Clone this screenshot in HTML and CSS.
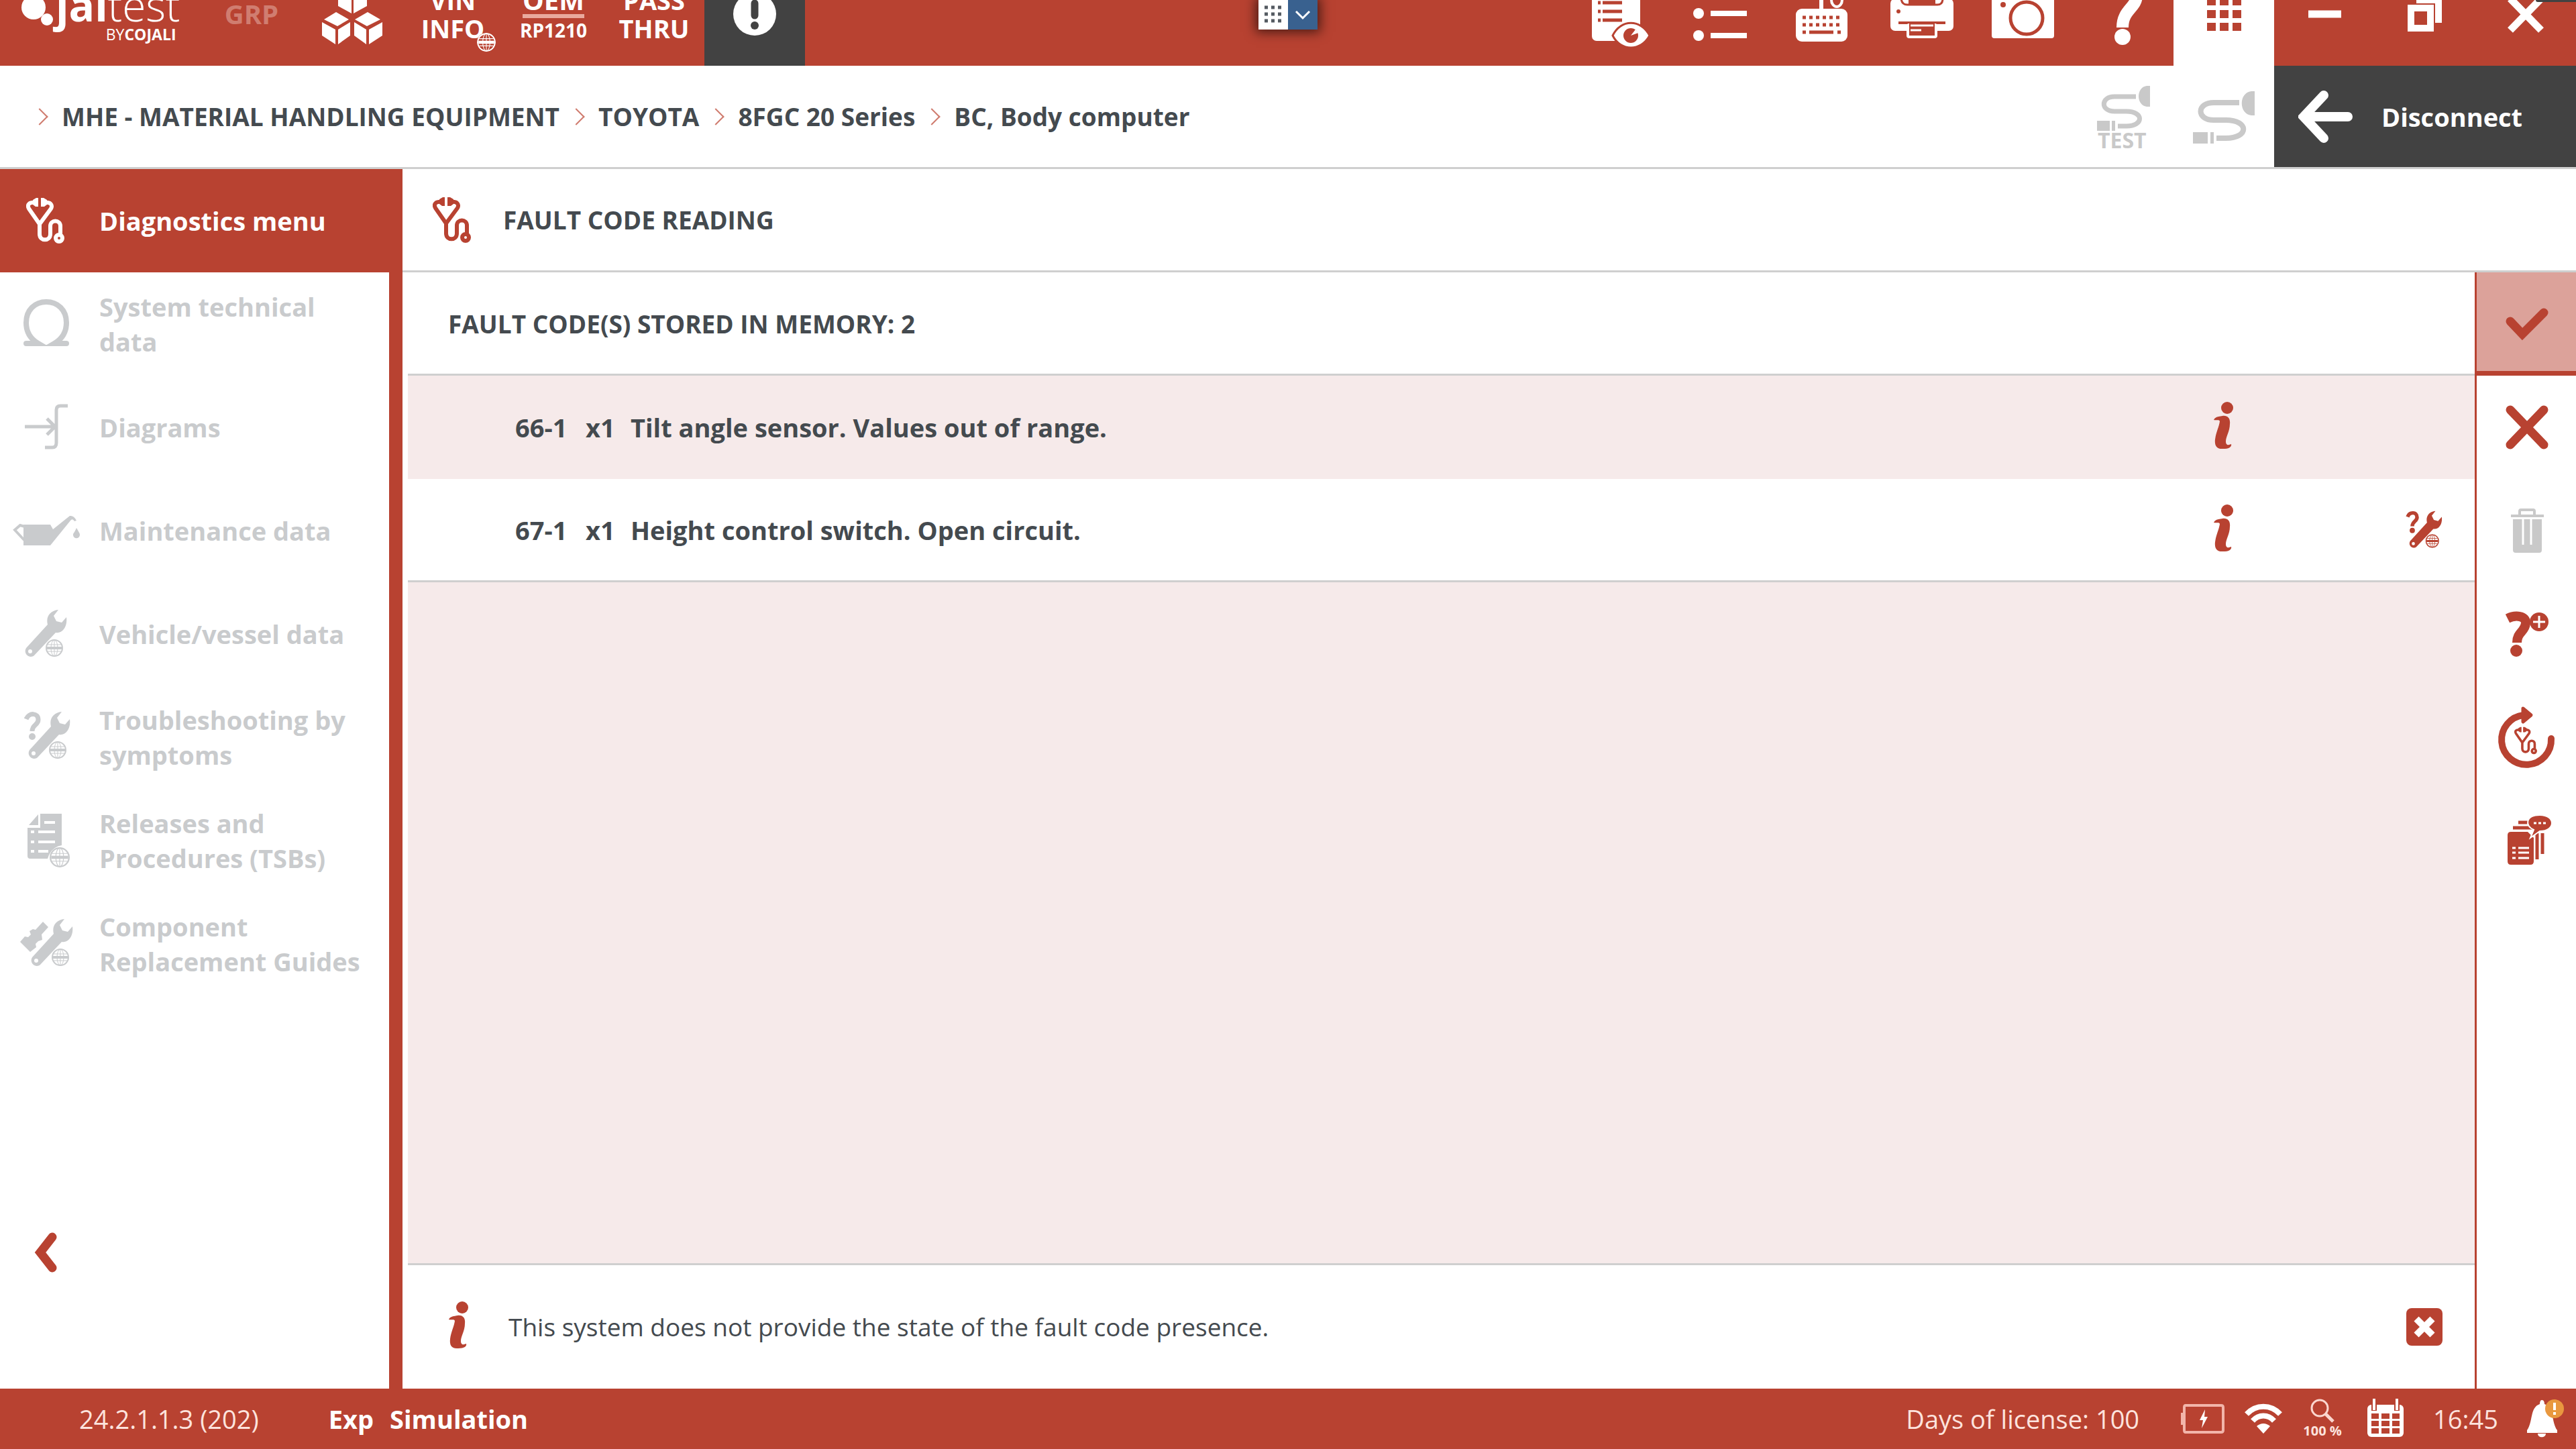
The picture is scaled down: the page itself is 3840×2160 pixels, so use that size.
FILE: index.html
```html
<!DOCTYPE html>
<html lang="en">
<head>
    <meta charset="UTF-8">
    <meta name="viewport" content="width=device-width, initial-scale=1.0">
    <title>Jaltest - Fault code reading</title>
    <link rel="stylesheet" href="styles.css">
</head>
<body>

    <!-- shared icons -->
    <svg class="sprite" aria-hidden="true">
        <symbol id="stethoscope" viewBox="0 0 57 68">
            <g fill="none" stroke="currentColor" stroke-width="6" stroke-linejoin="round">
                <path d="M15 7C4 6 1 10 4 16L20 39L37 16C40 10 36 6 27 7M20 38V54C20 65 36 65 36 54V42C36 32 51 32 51 42V54"/>
                <circle cx="49" cy="60" r="5"/>
            </g>
            <path fill="currentColor" d="M10 3L15 0H18V13H14L10 10ZM22 0H26L31 3V10L27 13H22Z"/>
        </symbol>
        <symbol id="globe" viewBox="0 0 26 26">
            <g fill="none" stroke="currentColor" stroke-width="2">
                <circle cx="13" cy="13" r="12"/>
                <ellipse cx="13" cy="13" rx="5" ry="12" stroke-width="1"/>
                <path d="M3 8H23M3 18H23M13 2V24" stroke-width="1"/>
                <path d="M2 13H24" stroke-width="4"/>
            </g>
        </symbol>
        <symbol id="wrench" viewBox="0 0 66 74">
            <path fill="currentColor" fill-rule="evenodd" d="M51 1C39 2 32 11 35 23L3 58C-2 66 8 75 15 69L47 35C57 37 65 26 63 12L56 20L48 18L44 10ZM9 60A3 3 0 1 0 9 66A3 3 0 1 0 9 60Z"/>
            <use href="#globe" x="32" y="45" width="26" height="26"/>
        </symbol>
        <symbol id="troubleshoot" viewBox="0 0 70 74">
            <path fill="none" stroke="currentColor" stroke-width="7" d="M3 12C7 2 21 2 21 13C21 21 12 20 12 30"/>
            <circle cx="12" cy="38" r="5" fill="currentColor"/>
            <use href="#wrench" x="5" y="0" width="66" height="74"/>
        </symbol>
        <symbol id="info" viewBox="0 0 30 70">
            <circle cx="21" cy="9" r="9" fill="currentColor"/>
            <path fill="currentColor" d="M1 27C3 22 9 22 14 21C22 20 26 25 25 33C25 44 19 52 19 59C19 65 23 65 27 63C28 67 24 70 15 70C5 71 2 65 3 56C4 46 9 37 10 29C9 26 5 28 1 27Z"/>
        </symbol>
    </svg>

    <header class="topbar">
        <div class="logo">
            <svg class="logo-mark" viewBox="0 0 83 154" aria-hidden="true">
                <ellipse cx="50" cy="67" rx="18" ry="18" fill="#fff"/>
                <circle cx="70" cy="85" r="9" fill="#fff"/>
            </svg>
            <div class="logo-text">
                <div class="logo-name"><b>jal</b>test</div>
                <div class="logo-by">BY<b>COJALI</b></div>
            </div>
        </div>
        <button class="tool tool-faded">GRP</button>
        <button class="tool" aria-label="Modules">
            <svg viewBox="0 0 150 154">
                <g fill="#fff">
                    <path d="M54 38L74 48V76L65 71L54 65ZM97 38L77 48V76L86 71L97 65Z"/>
                    <path d="M51 74L70 85L53 95L33 85ZM98 74L117 85L97 95L79 85Z"/>
                    <path d="M30 89L50 100V122L30 109ZM72 89L54 100V122L72 109ZM78 89L96 100V122L78 109ZM120 89L100 100V122L120 109Z"/>
                </g>
            </svg>
        </button>
        <button class="tool"><span>VIN<br>INFO</span><svg class="tool-badge"><use href="#globe"/></svg></button>
        <button class="tool tool-oem"><span>OEM</span><small>RP1210</small></button>
        <button class="tool"><span>PASS<br>THRU</span></button>
        <button class="tool tool-dark" aria-label="Warnings">
            <svg viewBox="0 0 150 154">
                <circle cx="75" cy="77" r="32" fill="#fff"/>
                <path d="M75 61V79" stroke="#424242" stroke-width="11" stroke-linecap="round"/>
                <circle cx="75" cy="94" r="6" fill="#424242"/>
            </svg>
        </button>

        <div class="spacer"></div>

        <button class="tool" aria-label="View report">
            <svg viewBox="0 0 150 154">
                <rect x="33" y="30" width="72" height="87" rx="7" fill="#fff"/>
                <path d="M42 60H46M49 60H78M42 73H46M49 73H78M42 86H46M49 86H78" stroke="#b84231" stroke-width="5"/>
                <path d="M64 109C76 84 106 84 119 109C106 133 76 133 64 109Z" fill="#fff" stroke="#b84231" stroke-width="3"/>
                <circle cx="91" cy="109" r="11" fill="#b84231"/>
                <path d="M91 109L98 100L102 105Z" fill="#fff"/>
            </svg>
        </button>
        <button class="tool" aria-label="List">
            <svg viewBox="0 0 150 154">
                <g fill="#fff">
                    <circle cx="42" cy="43" r="8"/><circle cx="42" cy="76" r="8"/><circle cx="42" cy="109" r="8"/>
                </g>
                <path d="M60 43H114M60 76H114M60 109H114" stroke="#fff" stroke-width="8"/>
            </svg>
        </button>
        <button class="tool" aria-label="Keyboard">
            <svg viewBox="0 0 150 154">
                <path d="M75 72V34" stroke="#fff" stroke-width="6"/>
                <ellipse cx="98" cy="56" rx="8" ry="10" fill="none" stroke="#fff" stroke-width="4"/>
                <rect x="37" y="69" width="77" height="49" rx="9" fill="#fff"/>
                <path d="M47 82H104M47 93H104" stroke="#b84231" stroke-width="5" stroke-dasharray="5 5"/>
                <path d="M47 104H52M57 104H93M99 104H104" stroke="#b84231" stroke-width="5"/>
            </svg>
        </button>
        <button class="tool" aria-label="Print">
            <svg viewBox="0 0 150 154">
                <path d="M44 40H107V60H44Z" fill="#fff"/>
                <rect x="28" y="54" width="94" height="48" rx="7" fill="#fff"/>
                <path d="M44 54Q45 63 53 63H98Q106 63 106 54" fill="none" stroke="#b84231" stroke-width="3"/>
                <path d="M55 52H95V62H55Z" fill="#b84231"/>
                <circle cx="40" cy="73" r="3" fill="#b84231"/>
                <path d="M40 90H110" stroke="#b84231" stroke-width="4"/>
                <rect x="52" y="91" width="46" height="22" rx="4" fill="#fff"/>
                <path d="M56 91H94V109H56Z" fill="#b84231"/>
                <path d="M58 94H92M58 101H74" stroke="#fff" stroke-width="3"/>
            </svg>
        </button>
        <button class="tool" aria-label="Screenshot">
            <svg viewBox="0 0 150 154">
                <path d="M54 44H96L101 54H54Z" fill="#fff"/>
                <rect x="29" y="52" width="93" height="61" rx="4" fill="#fff"/>
                <circle cx="81" cy="83" r="24" fill="none" stroke="#b84231" stroke-width="5"/>
                <circle cx="46" cy="63" r="4" fill="#b84231"/>
            </svg>
        </button>
        <button class="tool" aria-label="Help">
            <svg viewBox="0 0 150 154">
                <path d="M74 97C74 70 95 68 95 49C95 30 75 28 53 37" fill="none" stroke="#fff" stroke-width="18"/>
                <circle cx="74" cy="111" r="12" fill="#fff"/>
            </svg>
        </button>
        <button class="tool tool-light" aria-label="Apps">
            <svg viewBox="0 0 150 154">
                <path d="M50 58H63M69 58H82M88 58H101M50 77H63M69 77H82M88 77H101M50 96H63M69 96H82M88 96H101" stroke="#b84231" stroke-width="12"/>
            </svg>
        </button>
        <button class="tool" aria-label="Minimize">
            <svg viewBox="0 0 150 154"><path d="M51 77H100" stroke="#fff" stroke-width="11"/></svg>
        </button>
        <button class="tool" aria-label="Restore">
            <svg viewBox="0 0 150 154">
                <path d="M62 48H100V90H90V61H62Z" fill="#fff"/>
                <rect x="54" y="68" width="29" height="30" fill="none" stroke="#fff" stroke-width="10"/>
            </svg>
        </button>
        <button class="tool" aria-label="Close">
            <svg viewBox="0 0 150 154"><path d="M52 54L98 101M98 54L52 101" stroke="#fff" stroke-width="11"/></svg>
        </button>
    </header>

    <div class="crumbbar">
        <nav class="crumbs" aria-label="Breadcrumb">
            <a href="#">MHE - MATERIAL HANDLING EQUIPMENT</a>
            <a href="#">TOYOTA</a>
            <a href="#">8FGC 20 Series</a>
            <a href="#">BC, Body computer</a>
        </nav>
        <button class="plug" aria-label="Cable test" disabled>
            <svg viewBox="0 0 150 151">
                <path d="M94 46H62C41 46 41 68 62 68H80C106 68 106 90 80 90H67" fill="none" stroke="currentColor" stroke-width="7"/>
                <path d="M115 30H110C94 32 94 59 110 61H115ZM36 82H55V97H36ZM58 82H63V97H58Z" fill="currentColor"/>
                <text x="37" y="123">TEST</text>
            </svg>
        </button>
        <button class="plug" aria-label="Cable" disabled>
            <svg viewBox="0 0 150 151">
                <path d="M98 55H60C34 55 34 81 60 81H78C113 81 113 108 78 108H64" fill="none" stroke="currentColor" stroke-width="8"/>
                <path d="M121 38H116C97 40 97 72 116 74H121ZM29 99H51V116H29ZM55 99H60V116H55Z" fill="currentColor"/>
            </svg>
        </button>
        <button class="disconnect">
            <svg viewBox="0 0 82 78"><path d="M38 7L8 39L38 71M10 39H74" fill="none" stroke="#fff" stroke-width="14" stroke-linecap="round"/></svg>
            Disconnect
        </button>
    </div>

    <div class="main">
        <aside class="sidebar">
            <button class="menu-item active">
                <svg viewBox="0 0 148 154"><use href="#stethoscope" x="39" y="43" width="57" height="68"/></svg>
                <span>Diagnostics menu</span>
            </button>
            <div class="menu">
                <button class="menu-item" disabled>
                    <svg viewBox="0 0 148 154"><path d="M39 106H57C45 99 39 88 39 75C39 56 52 44 69 44C86 44 99 56 99 75C99 88 93 99 81 106H99" fill="none" stroke="currentColor" stroke-width="8" stroke-linecap="round"/></svg>
                    <span>System technical data</span>
                </button>
                <button class="menu-item" disabled>
                    <svg viewBox="0 0 148 154"><path d="M101 45H90Q84 45 84 51V100Q84 107 78 107H67M37 76H82M70 64L82 76L70 88" fill="none" stroke="currentColor" stroke-width="5"/></svg>
                    <span>Diagrams</span>
                </button>
                <button class="menu-item" disabled>
                    <svg viewBox="0 0 148 154">
                        <path d="M35 68H75L79 75L104 55Q110 54 114 62L111 63Q108 58 105 62L75 99H35ZM114 73C118 80 119 81 119 83C119 90 109 90 109 83C109 81 111 80 114 73Z" fill="currentColor"/>
                        <path d="M36 91L22 76L30 69L37 71" fill="none" stroke="currentColor" stroke-width="4"/>
                    </svg>
                    <span>Maintenance data</span>
                </button>
                <button class="menu-item" disabled>
                    <svg viewBox="0 0 148 154"><use href="#wrench" x="36" y="40" width="66" height="74"/></svg>
                    <span>Vehicle/vessel data</span>
                </button>
                <button class="menu-item" disabled>
                    <svg viewBox="0 0 148 154"><use href="#troubleshoot" x="36" y="38" width="70" height="74"/></svg>
                    <span>Troubleshooting by symptoms</span>
                </button>
                <button class="menu-item" disabled>
                    <svg viewBox="0 0 148 154">
                        <path d="M57 38V54H43ZM60 37H92V84Q76 87 71 104H45Q41 104 41 100V58H60Z" fill="currentColor"/>
                        <path d="M66 50H82M46 64H51M57 64H82M46 79H51M57 79H82M46 93H51M57 93H72" stroke="#fff" stroke-width="4"/>
                        <use href="#globe" x="74" y="87" width="30" height="30"/>
                    </svg>
                    <span>Releases and Procedures (TSBs)</span>
                </button>
                <button class="menu-item" disabled>
                    <svg viewBox="0 0 148 154">
                        <path d="M64 44L72 52L62 63L63 71L57 73L53 77L54 82L45 89L30 74L37 66L42 67L46 63L44 58L49 55L53 56Z" fill="currentColor"/>
                        <use href="#wrench" x="45" y="39" width="66" height="74"/>
                    </svg>
                    <span>Component Replacement Guides</span>
                </button>
                <button class="collapse" aria-label="Collapse menu">
                    <svg viewBox="0 0 36 60"><path d="M28 7L10 30L28 53" fill="none" stroke="currentColor" stroke-width="13" stroke-linecap="round"/></svg>
                </button>
            </div>
        </aside>

        <section class="content">
            <h1 class="page-title">
                <svg><use href="#stethoscope"/></svg>
                FAULT CODE READING
            </h1>

            <div class="work">
                <div class="panel">
                    <h2 class="stored">FAULT CODE(S) STORED IN MEMORY: 2</h2>
                    <div class="list">
                        <table class="faults">
                            <tr>
                                <td class="code">66-1</td>
                                <td class="times">x1</td>
                                <td>Tilt angle sensor. Values out of range.</td>
                                <td class="action"><button aria-label="Information"><svg class="info"><use href="#info"/></svg></button></td>
                                <td class="action"></td>
                                <td class="action"></td>
                            </tr>
                            <tr>
                                <td class="code">67-1</td>
                                <td class="times">x1</td>
                                <td>Height control switch. Open circuit.</td>
                                <td class="action"><button aria-label="Information"><svg class="info"><use href="#info"/></svg></button></td>
                                <td class="action"></td>
                                <td class="action"><button aria-label="Troubleshooting"><svg class="guide"><use href="#troubleshoot"/></svg></button></td>
                            </tr>
                        </table>
                    </div>
                    <div class="note">
                        <svg class="info"><use href="#info"/></svg>
                        <p>This system does not provide the state of the fault code presence.</p>
                        <button class="note-close" aria-label="Close message">
                            <svg viewBox="0 0 54 56"><path d="M15 16L39 40M39 16L15 40" stroke="#fff" stroke-width="10"/></svg>
                        </button>
                    </div>
                </div>

                <div class="rail">
                    <button class="selected" aria-label="Accept">
                        <svg viewBox="0 0 148 154"><path d="M50 73L68 92L100 60" fill="none" stroke="currentColor" stroke-width="13" stroke-linecap="round"/></svg>
                    </button>
                    <button aria-label="Cancel">
                        <svg viewBox="0 0 148 154"><path d="M50 51L100 103M100 51L50 103" stroke="currentColor" stroke-width="13" stroke-linecap="round"/></svg>
                    </button>
                    <button aria-label="Delete" disabled>
                        <svg viewBox="0 0 148 154">
                            <path d="M51 55H100M64 55V48Q64 46 66 46H84Q86 46 86 48V55" fill="none" stroke="currentColor" stroke-width="4"/>
                            <path d="M54 60H97V106Q97 110 93 110H58Q54 110 54 106Z" fill="currentColor"/>
                            <path d="M69 60V98M81 60V98" stroke="#fff" stroke-width="3"/>
                        </svg>
                    </button>
                    <button aria-label="More help">
                        <svg viewBox="0 0 148 154">
                            <path d="M46 54C58 48 74 50 73 61C72 74 60 74 60 90" fill="none" stroke="currentColor" stroke-width="14"/>
                            <circle cx="59" cy="102" r="9" fill="currentColor"/>
                            <circle cx="93" cy="59" r="14" fill="currentColor"/>
                            <path d="M93 50V68M84 59H102" stroke="#fff" stroke-width="3"/>
                        </svg>
                    </button>
                    <button aria-label="Read again">
                        <svg viewBox="0 0 148 154">
                            <path d="M70 44A37 37 0 1 0 111 79" fill="none" stroke="currentColor" stroke-width="10" stroke-linecap="round"/>
                            <path d="M69 34L81 44L69 54Z" fill="currentColor" stroke="currentColor" stroke-width="5" stroke-linejoin="round"/>
                            <use href="#stethoscope" x="56" y="61" width="34" height="42"/>
                        </svg>
                    </button>
                    <button aria-label="Reports">
                        <svg viewBox="0 0 148 154">
                            <path d="M62 50H76M54 58H82Q90 60 90 68V105M98 66V97" fill="none" stroke="currentColor" stroke-width="5"/>
                            <path d="M51 64H76L85 73V108Q85 113 80 113H51Q46 113 46 108V69Q46 64 51 64Z" fill="currentColor"/>
                            <path d="M53 88H58M62 88H78M53 95H58M62 95H78M53 103H58M62 103H78" stroke="#fff" stroke-width="3"/>
                            <path d="M94 39C106 39 112 45 112 51C112 57 106 63 94 63L80 73L85 61C71 55 73 39 94 39Z" fill="currentColor" stroke="#fff" stroke-width="2"/>
                            <path d="M85 51H89M92 51H96M99 51H103" stroke="#fff" stroke-width="3"/>
                        </svg>
                    </button>
                </div>
            </div>
        </section>
    </div>

    <footer class="statusbar">
        <span class="version">24.2.1.1.3 (202)</span>
        <b>Exp</b>
        <b>Simulation</b>
        <div class="spacer"></div>
        <span>Days of license: 100</span>
        <div class="status-icons">
            <svg class="battery" viewBox="0 0 66 46">
                <path d="M7 3H60Q63 3 63 6V40Q63 43 60 43H7Q5 43 5 40V6Q5 3 7 3Z" fill="none" stroke="#f2b5aa" stroke-width="4"/>
                <path d="M2 14V32" stroke="#f2b5aa" stroke-width="4"/>
                <path d="M36 9L28 25H33L31 37L40 20H35Z" fill="#fff"/>
            </svg>
            <svg class="wifi" viewBox="0 0 58 46">
                <path d="M4 16C18 1 40 1 54 16M13 26C22 16 36 16 45 26" fill="none" stroke="#fff" stroke-width="8"/>
                <path d="M29 45L19 34Q29 26 39 34Z" fill="#fff"/>
            </svg>
            <div class="zoom">
                <svg viewBox="0 0 36 36">
                    <circle cx="14" cy="14" r="12" fill="none" stroke="#fbd6ce" stroke-width="3"/>
                    <path d="M23 23L34 34" stroke="#fbd6ce" stroke-width="5"/>
                </svg>
                <span>100 %</span>
            </div>
            <svg class="calendar" viewBox="0 0 58 60">
                <rect x="2" y="9" width="54" height="48" rx="6" fill="#fff"/>
                <path d="M12 0V18M46 0V18" stroke="#b84231" stroke-width="8"/>
                <path d="M12 0V17M46 0V17" stroke="#fff" stroke-width="4"/>
                <path d="M8 22H19V30H8ZM23 22H35V30H23ZM39 22H50V30H39ZM8 33H19V41H8ZM23 33H35V41H23ZM39 33H50V41H39ZM8 44H19V52H8ZM23 44H35V52H23ZM39 44H50V52H39Z" fill="#b84231"/>
            </svg>
        </div>
        <span class="clock">16:45</span>
        <svg class="bell" viewBox="0 0 60 58">
            <path d="M23 1C26 1 27 4 27 7C42 12 37 34 46 46V50H1V46C10 34 5 12 20 7C20 4 21 1 23 1ZM17 51H29C29 58 17 58 17 51Z" fill="#fff"/>
            <circle cx="42" cy="14" r="14" fill="#e9983f"/>
            <path d="M42 5V16M42 19V23" stroke="#fff" stroke-width="4"/>
        </svg>
    </footer>

    <!-- remote session handle -->
    <div class="session-bar">
        <button aria-label="Move">
            <svg viewBox="0 0 44 44"><path d="M9 11H34M9 21H34M9 31H34" stroke="#555b62" stroke-width="5" stroke-dasharray="5 5"/></svg>
        </button>
        <button class="session-toggle" aria-label="Expand">
            <svg viewBox="0 0 44 44"><path d="M12 17L22 27L32 17" fill="none" stroke="#fff" stroke-width="3"/></svg>
        </button>
    </div>
    <div class="corner-tab"></div>

</body>
</html>
```
FILE: styles.css
```css
* {
    box-sizing: border-box;
}

body {
    margin: 0;
    height: 100vh;
    display: flex;
    flex-direction: column;
    overflow: hidden;
    background-color: #fff;
    color: #444a4f;
    font-family: 'Open Sans', 'Noto Sans', sans-serif;
    font-size: 38px;
    line-height: 52px;
}

button {
    margin: 0;
    padding: 0;
    border: none;
    background: none;
    color: inherit;
    font: inherit;
    cursor: pointer;
}

svg {
    display: block;
    flex-shrink: 0;
}

a {
    color: inherit;
    text-decoration: none;
}

.sprite {
    display: none;
}

.spacer {
    flex: 1;
}

/* top bar, its upper part runs off the screen */
.topbar {
    height: 98px;
    flex-shrink: 0;
    display: flex;
    align-items: flex-end;
    overflow: hidden;
    background-color: #b84231;
    color: #fff;
}

.logo {
    width: 300px;
    height: 154px;
    display: flex;
}

.logo-mark {
    width: 83px;
    height: 154px;
}

.logo-text {
    padding-top: 34px;
}

.logo-name {
    font-size: 64px;
    line-height: 60px;
    font-weight: 300;
}

.logo-name b {
    font-weight: 700;
}

.logo-by {
    padding-right: 6px;
    font-size: 23px;
    line-height: 26px;
    text-align: right;
}

.tool {
    width: 150px;
    height: 154px;
    position: relative;
    display: flex;
    flex-direction: column;
    align-items: center;
    justify-content: center;
    font-weight: 700;
    line-height: 42px;
}

.tool:hover {
    background-color: #a63a2a;
}

.tool-faded {
    color: #d07d70;
    font-size: 40px;
}

.tool-oem {
    font-size: 40px;
}

.tool-oem span {
    border-bottom: 6px solid #e9a99d;
}

.tool-oem small {
    font-size: 28px;
    line-height: 36px;
}

.tool-dark {
    background-color: #424242;
}

.tool-light {
    background-color: #fff;
}

.tool-badge {
    position: absolute;
    left: 111px;
    top: 105px;
    width: 28px;
    height: 28px;
    background-color: #b84231;
    border-radius: 50%;
}

/* breadcrumb */
.crumbbar {
    height: 154px;
    flex-shrink: 0;
    display: flex;
    border-bottom: 3px solid #cfcfcf;
}

.crumbs {
    flex: 1;
    display: flex;
    align-items: center;
    gap: 16px;
    padding-left: 50px;
    font-size: 37px;
    font-weight: 700;
}

.crumbs a {
    display: flex;
    align-items: center;
    gap: 24px;
}

.crumbs a::before {
    content: "";
    width: 16px;
    height: 16px;
    border-top: 2px solid #cf7b6e;
    border-right: 2px solid #cf7b6e;
    transform: rotate(45deg);
}

.plug {
    width: 150px;
    color: #c9c9c9;
}

.plug text {
    font-size: 32px;
    font-weight: 700;
    fill: currentColor;
}

.disconnect {
    width: 450px;
    display: flex;
    align-items: center;
    gap: 42px;
    padding-left: 36px;
    background-color: #424242;
    color: #fff;
    font-weight: 700;
}

.disconnect svg {
    width: 82px;
    height: 78px;
}

/* main area */
.main {
    flex: 1;
    min-height: 0;
    display: flex;
}

.sidebar {
    width: 600px;
    flex-shrink: 0;
    display: flex;
    flex-direction: column;
    background-color: #b84231;
}

.menu {
    flex: 1;
    display: flex;
    flex-direction: column;
    margin-right: 20px;
    background-color: #fff;
}

.menu-item {
    height: 154px;
    display: flex;
    align-items: center;
    padding-right: 24px;
    color: #c9cbcd;
    font-weight: 700;
    text-align: left;
}

.menu-item.active {
    color: #fff;
}

.menu-item svg {
    width: 148px;
    height: 154px;
}

.collapse {
    width: 136px;
    margin-top: auto;
    padding: 0 50px 173px;
    color: #b84231;
}

.collapse svg {
    width: 36px;
    height: 60px;
}

.content {
    flex: 1;
    display: flex;
    flex-direction: column;
}

.page-title {
    height: 154px;
    display: flex;
    align-items: center;
    gap: 48px;
    margin: 0;
    padding-left: 45px;
    border-bottom: 3px solid #cfcfcf;
    font-size: 37px;
    font-weight: 700;
}

.page-title svg {
    width: 57px;
    height: 68px;
    color: #b84231;
}

.work {
    flex: 1;
    display: flex;
}

.panel {
    flex: 1;
    display: flex;
    flex-direction: column;
    padding-left: 8px;
}

.stored {
    height: 154px;
    margin: 0;
    padding: 51px 60px;
    border-bottom: 3px solid #cfcfcf;
    font-size: 37px;
    font-weight: 700;
}

.list {
    flex: 1;
    background-color: #f6eaea;
}

.faults {
    width: 100%;
    border-collapse: separate;
    border-spacing: 0;
    font-weight: 700;
}

.faults td {
    height: 154px;
    padding: 0;
}

.faults tr:nth-child(even) td {
    background-color: #fff;
    border-bottom: 3px solid #cfcfcf;
}

.faults .code {
    width: 265px;
    padding-left: 160px;
}

.faults .times {
    width: 67px;
}

.faults .action {
    width: 150px;
    color: #b84231;
}

.action button {
    display: block;
    margin: 0 auto;
}

.info {
    width: 30px;
    height: 72px;
    margin-bottom: 6px;
    color: #b84231;
}

.guide {
    width: 56px;
    height: 58px;
}

.note {
    height: 187px;
    display: flex;
    align-items: center;
    gap: 60px;
    padding: 0 48px 0 60px;
    border-top: 3px solid #cfcfcf;
    font-size: 37px;
}

.note p {
    flex: 1;
    margin: 0;
}

.note-close {
    width: 54px;
    height: 56px;
    background-color: #b84231;
    border-radius: 8px;
}

.rail {
    width: 151px;
    border-left: 3px solid #b84231;
}

.rail button {
    display: block;
    width: 100%;
    height: 154px;
    color: #b84231;
}

.rail button:disabled {
    color: #c9c9c9;
}

.rail .selected {
    background-color: #dca29a;
    box-shadow: inset 0 -7px #b84231;
}

/* status bar */
.statusbar {
    height: 90px;
    flex-shrink: 0;
    display: flex;
    align-items: center;
    padding: 0 14px 0 118px;
    background-color: #b84231;
    color: #fde3dd;
}

.statusbar b {
    margin-right: 24px;
    color: #fff;
    font-weight: 700;
}

.version {
    margin-right: 104px;
}

.status-icons {
    display: flex;
    align-items: center;
    gap: 28px;
    margin-left: 62px;
}

.battery {
    width: 66px;
    height: 46px;
}

.wifi {
    width: 58px;
    height: 46px;
}

.zoom {
    display: flex;
    flex-direction: column;
    align-items: center;
    width: 62px;
    margin-right: 6px;
    font-size: 20px;
    line-height: 24px;
    font-weight: 700;
    white-space: nowrap;
}

.zoom svg {
    width: 36px;
    height: 36px;
}

.calendar {
    width: 58px;
    height: 60px;
}

.clock {
    margin: 0 42px;
}

.bell {
    width: 60px;
    height: 58px;
}

/* things lying over the page */
.session-bar {
    position: absolute;
    top: 0;
    left: 50%;
    display: flex;
    width: 88px;
    height: 44px;
    margin-left: -44px;
    background-color: #fff;
    box-shadow: 0 0 16px 4px rgba(0, 0, 0, 0.6);
}

.session-bar button {
    width: 44px;
    height: 44px;
}

.session-bar .session-toggle {
    background-color: #39618f;
}

.corner-tab {
    position: absolute;
    top: 0;
    right: 0;
    width: 60px;
    height: 3px;
    background-color: #424242;
    border-bottom-left-radius: 3px;
}
```
